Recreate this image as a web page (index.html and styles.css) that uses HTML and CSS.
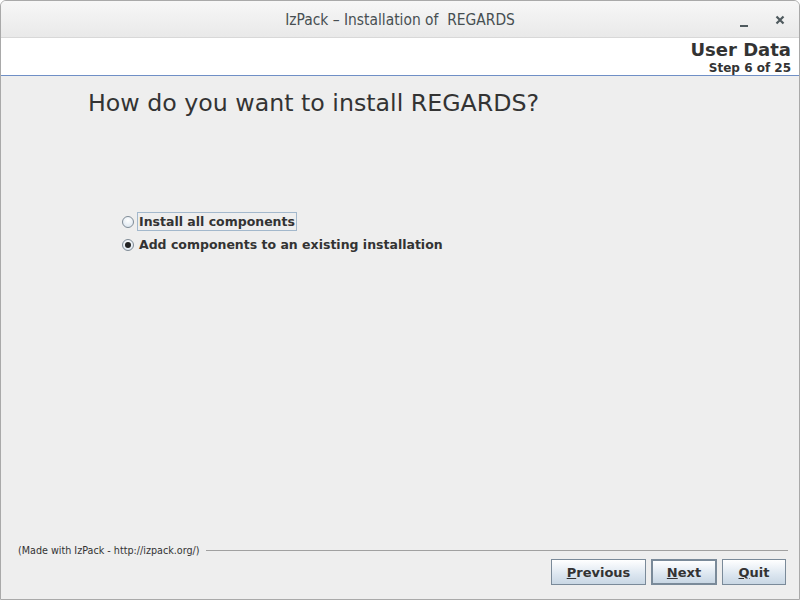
FILE: index.html
```html
<!DOCTYPE html>
<html>
<head>
<meta charset="utf-8">
<link rel="stylesheet" href="styles.css">
</head>
<body>
<div class="window">
  <div class="titlebar">
    <div class="title">IzPack – Installation of &nbsp;REGARDS</div>
    <div class="controls">
      <span class="ctl min"></span>
      <span class="ctl close">
        <svg width="10" height="10" viewBox="0 0 10 10"><path d="M1.5 1.5 L8.5 8.5 M8.5 1.5 L1.5 8.5" stroke="#4f5a5e" stroke-width="2.2" stroke-linecap="butt"/></svg>
      </span>
    </div>
  </div>
  <div class="header">
    <div class="h-title">User Data</div>
    <div class="h-step">Step 6 of 25</div>
  </div>
  <div class="content">
    <h1 class="question">How do you want to install REGARDS?</h1>
    <div class="options">
      <label class="opt"><span class="radio"></span><span class="lbl focus">Install all components</span></label>
      <label class="opt"><span class="radio checked"></span><span class="lbl">Add components to an existing installation</span></label>
    </div>
  </div>
  <div class="footer">
    <div class="credit"><span>(Made with IzPack - http://izpack.org/)</span><span class="rule"></span></div>
    <div class="buttons">
      <button class="btn prev"><u>P</u>revious</button>
      <button class="btn next default"><u>N</u>ext</button>
      <button class="btn quit"><u>Q</u>uit</button>
    </div>
  </div>
</div>
</body>
</html>
```
FILE: styles.css
```css
* { box-sizing: border-box; }
html, body { margin: 0; padding: 0; width: 800px; height: 600px; overflow: hidden; background: #ffffff; }
.window {
  width: 800px; height: 600px;
  border: 1px solid #a9a9a9;
  border-radius: 6px 6px 0 0;
  background: #eeeeee;
  display: flex; flex-direction: column;
  overflow: hidden;
  font-family: "DejaVu Sans", sans-serif;
}
.titlebar {
  height: 37px; flex: none;
  background: linear-gradient(#f7f7f7, #e9e9e9);
  display: flex; align-items: center; justify-content: center;
  position: relative;
  border-bottom: 1px solid #d8d8d8;
}
.title {
  font-family: "DejaVu Sans Condensed", "DejaVu Sans", sans-serif;
  font-size: 15.4px; color: #474f52; font-weight: 500;
  padding-top: 1px;
}
.controls { position: absolute; right: 14px; top: 0; height: 37px; display: flex; align-items: center; gap: 26px; }
.ctl { display: block; width: 10px; height: 10px; position: relative; }
.ctl.min::after { content: ""; position: absolute; left: 1px; bottom: -2px; width: 8px; height: 2px; background: #4f5a5e; }
.ctl.close svg { display: block; }
.header {
  height: 38px; flex: none; background: #ffffff;
  border-bottom: 1px solid #6f8fc6;
  display: flex; flex-direction: column; align-items: flex-end;
  padding: 1px 8px 0 0;
  color: #333333; font-weight: bold;
}
.h-title { font-size: 18px; line-height: 22px; }
.h-step { font-size: 12px; line-height: 14px; }
.content { flex: 1; padding: 12px 0 0 87px; }
.question { margin: 0; font-weight: normal; font-size: 23.7px; line-height: 30px; color: #333333; }
.options { margin: 94px 0 0 34px; display: flex; flex-direction: column; gap: 4px; }
.opt { display: flex; align-items: center; height: 19px; }
.radio {
  width: 12px; height: 12px; border-radius: 50%;
  border: 1px solid #7f8b96;
  background: radial-gradient(circle at 50% 35%, #ffffff, #d6e1ec);
  margin-right: 3px; position: relative; flex: none;
}
.radio.checked::after { content: ""; position: absolute; left: 2px; top: 2px; width: 6px; height: 6px; border-radius: 50%; background: #222222; }
.lbl { font-size: 12.5px; font-weight: bold; color: #333333; padding: 1px 1px; border: 1px solid transparent; line-height: 15px; }
.lbl.focus { border-color: #a3b8cc; }
.footer { flex: none; padding: 0 13px 14px 17px; }
.credit { display: flex; align-items: center; font-size: 9.6px; color: #333333; height: 14px; }
.rule { flex: 1; height: 1px; background: #a0a0a0; margin-left: 6px; margin-right: -2px; margin-top: 0; }
.buttons { display: flex; justify-content: flex-end; gap: 5px; margin-top: 2px; }
.btn {
  font-family: "DejaVu Sans", sans-serif; font-size: 13px; font-weight: bold; color: #333333;
  height: 26px; padding: 0; border: 1px solid #7a8a99;
  background: linear-gradient(#ffffff, #dce6f0 60%, #c9d7e4);
}
.btn u { text-decoration: underline; }
.prev { width: 95px; }
.next { width: 66px; border: 2px solid #7a8a99; }
.quit { width: 64px; }
```
